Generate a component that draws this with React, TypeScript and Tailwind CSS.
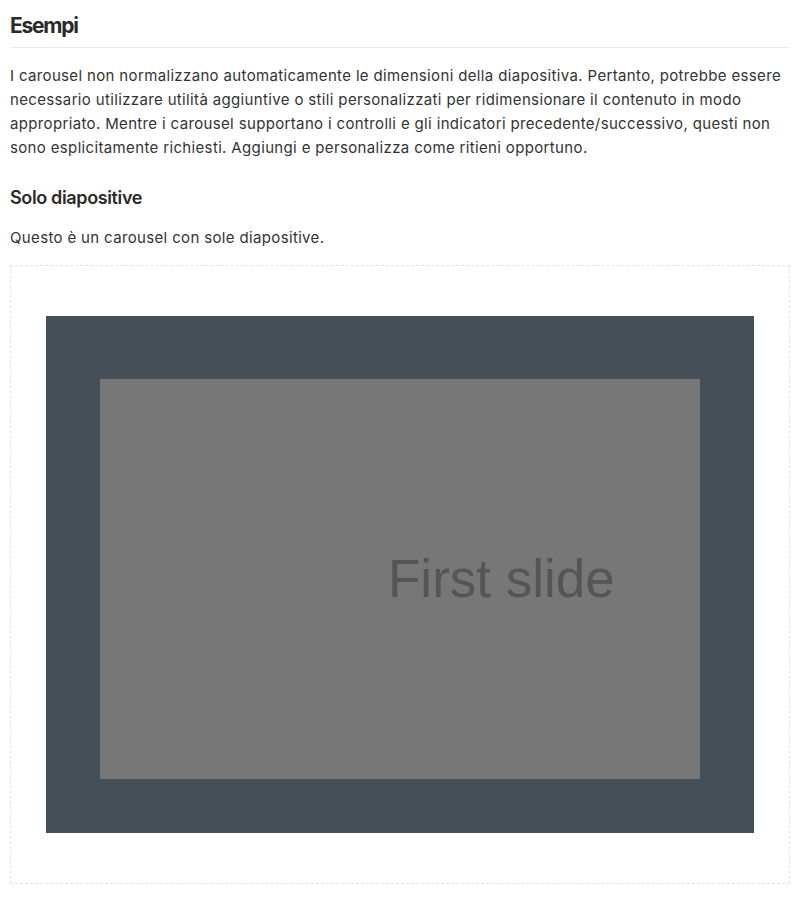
export default function App() {
  return (
    <div className="w-[800px] h-[910px] bg-white px-[10px] text-[#333]" style={{ fontFamily: "Inter, 'Noto Sans', sans-serif" }}>
      <h2 className="pt-[13px] pb-[8px] text-[21px] leading-[26px] font-bold tracking-[-0.06em] border-b border-[#ebebeb] text-[#2a2a2a]">Esempi</h2>
      <p className="mt-[16px] text-[15px] leading-[24px] tracking-[0.35px] text-[#333]">
        I carousel non normalizzano automaticamente le dimensioni della diapositiva. Pertanto, potrebbe essere necessario utilizzare utilità aggiuntive o stili personalizzati per ridimensionare il contenuto in modo appropriato. Mentre i carousel supportano i controlli e gli indicatori precedente/successivo, questi non sono esplicitamente richiesti. Aggiungi e personalizza come ritieni opportuno.
      </p>
      <h3 className="mt-[26px] text-[18px] leading-[24px] font-semibold tracking-[-0.02em] text-[#2a2a2a]">Solo diapositive</h3>
      <p className="mt-[16px] text-[15px] leading-[24px] tracking-[0.35px]">Questo è un carousel con sole diapositive.</p>
      <div className="mt-[15px] border border-dashed border-[#e3e3e3] h-[619px] px-[35px] pt-[50px]">
        <div className="bg-[#454f57] h-[517px] flex items-start justify-center pt-[63px]">
          <div className="w-[600px] h-[400px] bg-[#777777] relative">
            <span className="absolute left-[288px] top-[170px] text-[53px] leading-[60px] text-[#555555]" style={{ fontFamily: "'Liberation Sans', Arial, sans-serif" }}>First slide</span>
          </div>
        </div>
      </div>
    </div>
  );
}
